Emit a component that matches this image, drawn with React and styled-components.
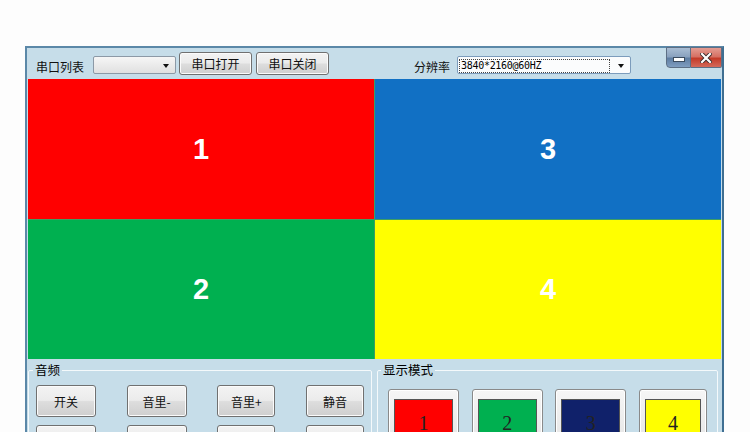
import React from 'react'
import styled, { createGlobalStyle } from 'styled-components'

const GlobalStyle = createGlobalStyle`
  html, body {
    margin: 0;
    padding: 0;
    background: #fdfdfd;
  }
  body {
    font-family: "Noto Sans CJK SC", "Liberation Sans", sans-serif;
    font-size: 12px;
    color: #111;
  }
`

const Page = styled.div`
  width: 750px;
  height: 432px;
  overflow: hidden;
  padding: 46px 0 0 25px;
  box-sizing: border-box;
`

const Window = styled.div`
  width: 699px;
  height: 420px;
  box-sizing: border-box;
  background: #c6dde9;
  border: 2px solid #5b88a8;
  border-bottom: none;
  border-right-color: #3f6f92;
  display: flex;
  flex-direction: column;
`

const Toolbar = styled.div`
  height: 31px;
  display: flex;
  align-items: center;
  padding-left: 9px;
`

const Label = styled.span`
  font-size: 12px;
  line-height: 14px;
  padding-top: 6px;
  margin-left: ${p => p.$ml || 0}px;
  white-space: nowrap;
`

const Combo = styled.div`
  width: ${p => p.$w}px;
  height: 18px;
  margin-left: ${p => p.$ml || 0}px;
  box-sizing: border-box;
  border: 1px solid ${p => (p.$focus ? '#7c9cbc' : '#8c99a6')};
  border-radius: 2px;
  background: ${p => (p.$focus ? '#fbfcfd' : 'linear-gradient(#f6f6f6, #e0e0e0)')};
  display: flex;
  align-items: center;
  padding: 1px 6px 0 1px;
  margin-top: 3px;
`

const ComboText = styled.span`
  flex: 1;
  height: 14px;
  font-family: "DejaVu Sans Mono", "Liberation Mono", monospace;
  font-size: 10px;
  letter-spacing: -0.3px;
  border: 1px dotted #444;
  box-sizing: border-box;
  padding-left: 1px;
  line-height: 12px;
  color: #000;
`

const Arrow = styled.span`
  margin-left: auto;
  width: 0;
  height: 0;
  border-left: 3.5px solid transparent;
  border-right: 3.5px solid transparent;
  border-top: 4px solid #111;
`

const Button = styled.button`
  width: ${p => p.$w}px;
  height: ${p => p.$h}px;
  margin-left: ${p => p.$ml || 0}px;
  padding: 0;
  box-sizing: border-box;
  border: 1px solid #707070;
  border-radius: 3px;
  background: linear-gradient(#f3f3f3 0%, #ebebeb 48%, #dddddd 52%, #cfcfcf 100%);
  box-shadow: inset 0 0 0 1px #fbfbfb;
  font-family: "Noto Sans CJK SC", sans-serif;
  font-size: 12px;
  color: #111;
`

const WinControls = styled.div`
  display: flex;
  align-self: flex-start;
  margin-left: auto;
  margin-top: -1px;
`

const WinBtn = styled.div`
  width: ${p => p.$w}px;
  height: 21px;
  display: flex;
  align-items: center;
  justify-content: center;
  border-radius: ${p => (p.$close ? '0 0 2px 0' : '0 0 0 4px')};
  background: ${p =>
    p.$close
      ? 'linear-gradient(#e49c92 0%, #d67164 45%, #c43b29 55%, #d4695a 100%)'
      : 'linear-gradient(#a9bdd3 0%, #8aa2bf 45%, #5f7ea3 55%, #7f9dc0 100%)'};
  border: 1px solid #5d6f85;
  border-left: ${p => (p.$close ? 'none' : '1px solid #5d6f85')};
  box-sizing: border-box;
`

const MinBar = styled.div`
  width: 10px;
  height: 3px;
  background: #fff;
  border: 1px solid #3b4b5e;
  margin-top: 4px;
`

const Screen = styled.div`
  margin: 0 1px;
  height: 280px;
  display: grid;
  grid-template-columns: 346px 1fr;
  grid-template-rows: 140px 1fr;
  gap: 1px;
  background: #3d9e63;
`

const Cell = styled.div`
  background: ${p => p.$bg};
  display: flex;
  align-items: center;
  justify-content: center;
  font-family: "Liberation Sans", Arial, sans-serif;
  font-weight: bold;
  font-size: 29px;
  color: #fff;
`

const Bottom = styled.div`
  display: flex;
  gap: 5px;
  padding: 4px 4px 0 1px;
`

const Group = styled.fieldset`
  flex: 0 0 ${p => p.$w}px;
  box-sizing: border-box;
  margin: 0;
  padding: ${p => p.$pt}px ${p => p.$px}px 0;
  border: 1px solid #f4f9fb;
  border-radius: 2px;
  min-width: 0;
`

const Legend = styled.legend`
  padding: 0 2px;
  margin-left: ${p => p.$ml}px;
  font-size: 12.5px;
  line-height: 14px;
  color: #000;
`

const ButtonRow = styled.div`
  display: flex;
  justify-content: space-between;
  margin-bottom: 8px;
`

const ModeButton = styled.div`
  width: ${p => p.$w}px;
  height: 60px;
  box-sizing: border-box;
  border: 1px solid #8a8a8a;
  border-radius: 3px;
  background: linear-gradient(#f6f6f6, #e4e4e4);
  box-shadow: inset 0 0 0 1px #fff;
  padding: 9px 5px 0;
`

const ModeSwatch = styled.div`
  height: 46px;
  background: ${p => p.$bg};
  border: 1px solid #555;
  display: flex;
  justify-content: center;
  font-family: "Liberation Serif", "Times New Roman", serif;
  font-size: 20px;
  line-height: 20px;
  padding-top: 13px;
  box-sizing: border-box;
  color: #222;
`

const audioRows = [
  ['开关', '音里-', '音里+', '静音'],
  ['', '', '', ''],
]

const modes = [
  { n: '1', bg: '#ff0000', w: 71 },
  { n: '2', bg: '#00b050', w: 71 },
  { n: '3', bg: '#10216a', w: 71 },
  { n: '4', bg: '#ffff00', w: 68 },
]

export default function App() {
  return (
    <Page>
      <GlobalStyle />
      <Window>
        <Toolbar>
          <Label>串口列表</Label>
          <Combo $w={83} $ml={9}>
            <Arrow />
          </Combo>
          <Button $w={73} $h={23} $ml={3}>串口打开</Button>
          <Button $w={73} $h={23} $ml={4}>串口关闭</Button>
          <Label $ml={85}>分辨率</Label>
          <Combo $w={174} $ml={7} $focus>
            <ComboText>3840*2160@60HZ</ComboText>
            <Arrow style={{ marginLeft: 8 }} />
          </Combo>
          <WinControls>
            <WinBtn $w={25}>
              <MinBar />
            </WinBtn>
            <WinBtn $w={31} $close>
              <svg width="12" height="10" viewBox="0 0 12 10">
                <path d="M2 1 L10 9 M10 1 L2 9" stroke="#3a2a2a" strokeWidth="4" strokeLinecap="square" />
                <path d="M2 1 L10 9 M10 1 L2 9" stroke="#fff" strokeWidth="2.2" strokeLinecap="square" />
              </svg>
            </WinBtn>
          </WinControls>
        </Toolbar>

        <Screen>
          <Cell $bg="#ff0000">1</Cell>
          <Cell $bg="#1170c4">3</Cell>
          <Cell $bg="#00b050">2</Cell>
          <Cell $bg="#ffff00">4</Cell>
        </Screen>

        <Bottom>
          <Group $w={344} $pt={8} $px={7}>
            <Legend $ml={-3}>音频</Legend>
            {audioRows.map((row, i) => (
              <ButtonRow key={i}>
                {row.map((t, j) => (
                  <Button key={j} $w={j < 2 ? 60 : 58} $h={32}>{t}</Button>
                ))}
              </ButtonRow>
            ))}
          </Group>
          <Group $w={341} $pt={12} $px={10}>
            <Legend $ml={-7}>显示模式</Legend>
            <ButtonRow>
              {modes.map(m => (
                <ModeButton key={m.n} $w={m.w}>
                  <ModeSwatch $bg={m.bg}>{m.n}</ModeSwatch>
                </ModeButton>
              ))}
            </ButtonRow>
          </Group>
        </Bottom>
      </Window>
    </Page>
  )
}
